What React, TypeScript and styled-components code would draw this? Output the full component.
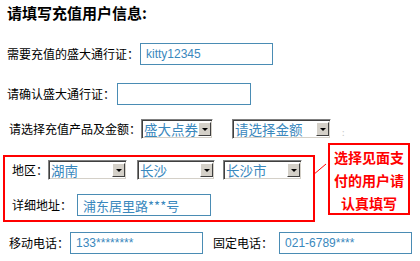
import styled, { createGlobalStyle } from "styled-components";

const GlobalStyle = createGlobalStyle`
  html, body {
    margin: 0;
    padding: 0;
    background: #ffffff;
  }
  body {
    font-family: "Noto Sans CJK SC", "Liberation Sans", sans-serif;
    color: #000;
  }
`;

const Page = styled.div`
  width: 420px;
  height: 261px;
  padding-top: 3px;
  box-sizing: border-box;
  display: flex;
  flex-direction: column;
  overflow: hidden;
`;

const Title = styled.h1`
  margin: 0 0 0 7px;
  font-size: 15px;
  line-height: 20px;
  font-weight: bold;
`;

const Row = styled.div<{ $indent: number; $top: number; $height?: number }>`
  display: flex;
  align-items: center;
  margin-top: ${(p) => p.$top}px;
  padding-left: ${(p) => p.$indent}px;
  height: ${(p) => p.$height ?? 22}px;
`;

const Label = styled.span<{ $gap?: number; $left?: number }>`
  font-size: 12px;
  line-height: 16px;
  white-space: nowrap;
  margin-left: ${(p) => p.$left ?? 0}px;
  margin-right: ${(p) => p.$gap ?? 0}px;
`;

const TextBox = styled.div<{ $width: number; $size?: number }>`
  width: ${(p) => p.$width}px;
  height: 22px;
  box-sizing: border-box;
  border: 1px solid #4a8cb4;
  padding-left: 5px;
  display: flex;
  align-items: center;
  font-family: ${(p) =>
    p.$size ? '"Noto Sans CJK SC", sans-serif' : '"Liberation Sans", Arial, sans-serif'};
  font-size: ${(p) => p.$size ?? 12}px;
  color: #3a88bd;
  white-space: nowrap;
`;

const Combo = styled.div<{ $width: number; $gap?: number }>`
  width: ${(p) => p.$width}px;
  height: 20px;
  box-sizing: border-box;
  border-style: solid;
  border-width: 1px;
  border-color: #808080 #ffffff #ffffff #808080;
  box-shadow: inset 1px 1px 0 #404040, inset -1px -1px 0 #d4d0c8;
  padding: 2px 1px 2px 2px;
  margin-right: ${(p) => p.$gap ?? 0}px;
  display: flex;
  align-items: center;
  background: #fff;
`;

const ComboText = styled.span`
  flex: 1;
  min-width: 0;
  font-size: 13.5px;
  line-height: 16px;
  color: #3a88bd;
  white-space: nowrap;
`;

const ArrowButton = styled.span`
  flex: none;
  width: 13px;
  height: 14px;
  box-sizing: border-box;
  background: #d4d0c8;
  border-style: solid;
  border-width: 1px;
  border-color: #ffffff #404040 #404040 #ffffff;
  display: flex;
  align-items: center;
  justify-content: center;

  &::after {
    content: "";
    border-left: 3px solid transparent;
    border-right: 3px solid transparent;
    border-top: 3px solid #000;
  }
`;

const Speck = styled.span`
  font-size: 9px;
  color: #c8c8c8;
  margin-left: 11px;
  margin-top: 6px;
`;

const Section = styled.div`
  position: relative;
  display: flex;
  align-items: flex-start;
  margin-top: 4px;
  padding-left: 3px;
`;

const RegionBox = styled.div`
  margin-top: 12px;
  width: 312px;
  height: 67px;
  box-sizing: border-box;
  border: 2px solid #ff0000;
  padding: 3px 0 0 7px;
  display: flex;
  flex-direction: column;
`;

const BoxRow = styled.div<{ $top: number; $height: number }>`
  display: flex;
  align-items: center;
  margin-top: ${(p) => p.$top}px;
  height: ${(p) => p.$height}px;
`;

const Callout = styled.div`
  margin-left: 13px;
  width: 82px;
  height: 72px;
  box-sizing: border-box;
  border: 2px solid #ff0000;
  padding-top: 1px;
  text-align: center;
  font-size: 14px;
  line-height: 23px;
  font-weight: bold;
  color: #ff0000;
`;

const Connector = styled.svg`
  position: absolute;
  left: 313px;
  top: 20px;
  overflow: visible;
`;

function Select({ text, width, gap }: { text: string; width: number; gap?: number }) {
  return (
    <Combo $width={width} $gap={gap}>
      <ComboText>{text}</ComboText>
      <ArrowButton />
    </Combo>
  );
}

export default function App() {
  return (
    <Page>
      <GlobalStyle />
      <Title>请填写充值用户信息:</Title>
      <Row $indent={7} $top={20}>
        <Label $gap={1}>需要充值的盛大通行证：</Label>
        <TextBox $width={133}>kitty12345</TextBox>
      </Row>
      <Row $indent={7} $top={18}>
        <Label $gap={2}>请确认盛大通行证：</Label>
        <TextBox $width={134} />
      </Row>
      <Row $indent={9} $top={14} $height={20}>
        <Label>请选择充值产品及金额：</Label>
        <Select text="盛大点券" width={72} gap={19} />
        <Select text="请选择金额" width={99} />
        <Speck>:</Speck>
      </Row>
      <Section>
        <RegionBox>
          <BoxRow $top={0} $height={20}>
            <Label>地区：</Label>
            <Select text="湖南" width={79} gap={10} />
            <Select text="长沙" width={78} gap={8} />
            <Select text="长沙市" width={79} />
          </BoxRow>
          <BoxRow $top={14} $height={22}>
            <Label $gap={5}>详细地址：</Label>
            <TextBox $width={134} $size={13}>
              浦东居里路***号
            </TextBox>
          </BoxRow>
        </RegionBox>
        <Callout>
          选择见面支
          <br />
          付的用户请
          <br />
          认真填写
        </Callout>
        <Connector width="14" height="12">
          <line x1="0" y1="12" x2="13" y2="1" stroke="#ff0000" strokeWidth="1" />
        </Connector>
      </Section>
      <Row $indent={9} $top={10}>
        <Label $gap={1}>移动电话：</Label>
        <TextBox $width={133}>133********</TextBox>
        <Label $gap={6} $left={10}>
          固定电话：
        </Label>
        <TextBox $width={133}>021-6789****</TextBox>
      </Row>
    </Page>
  );
}
